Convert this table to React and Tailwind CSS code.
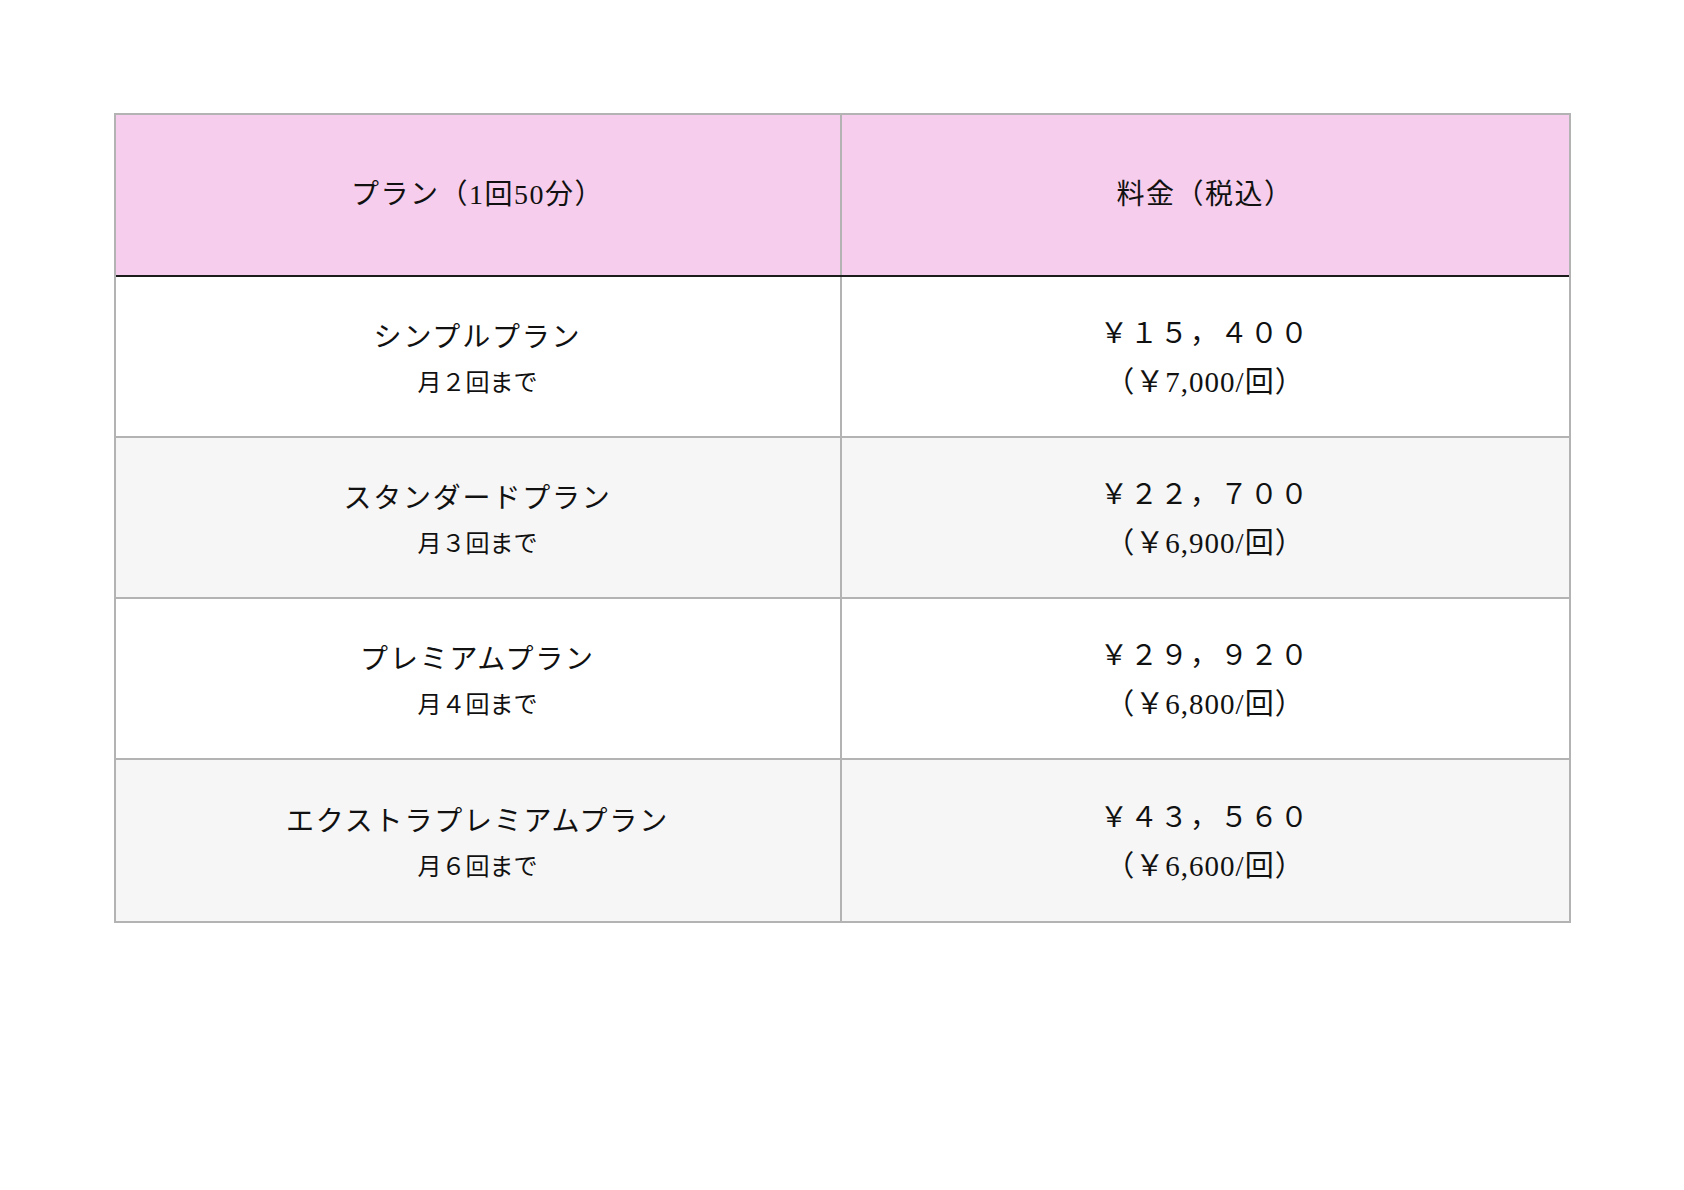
const plans = [
  { name: 'シンプルプラン', count: '月２回まで', price: '￥１５，４００', per: '（￥7,000/回）' },
  { name: 'スタンダードプラン', count: '月３回まで', price: '￥２２，７００', per: '（￥6,900/回）' },
  { name: 'プレミアムプラン', count: '月４回まで', price: '￥２９，９２０', per: '（￥6,800/回）' },
  { name: 'エクストラプレミアムプラン', count: '月６回まで', price: '￥４３，５６０', per: '（￥6,600/回）' },
];

export default function App() {
  return (
    <div className="min-h-[1190px] w-full bg-white pt-[113px] font-['Liberation_Serif','Noto_Sans_CJK_JP',serif] text-[#111]">
      <div className="mx-auto w-[1457px] border-2 border-[#b3b3b3]">
        {/* ヘッダー */}
        <div className="grid h-[162px] grid-cols-[726px_1fr] border-b-2 border-[#1c1c1c] bg-[#f6cdec] text-[28px] tracking-[1.5px]">
          <div className="flex items-center justify-center border-r-2 border-[#b3b3b3]">プラン（1回50分）</div>
          <div className="flex items-center justify-center">料金（税込）</div>
        </div>

        {/* プラン一覧 */}
        {plans.map((p, i) => (
          <div
            key={p.name}
            className={`grid h-[161px] grid-cols-[726px_1fr] ${i < plans.length - 1 ? 'border-b-2 border-[#b3b3b3]' : ''} ${i % 2 === 1 ? 'bg-[#f6f6f6]' : 'bg-white'}`}
          >
            <div className="flex flex-col items-center justify-center border-r-2 border-[#b3b3b3] pt-[4px]">
              <div className="text-[28px] leading-[48px] tracking-[1.8px]">{p.name}</div>
              <div className="text-[24px] leading-[42px]">{p.count}</div>
            </div>
            <div className="flex flex-col items-center justify-center pt-[3px]">
              <div className="text-[28px] leading-[48px] tracking-[2px]">{p.price}</div>
              <div className="text-[29px] leading-[48px] tracking-[1px]">{p.per}</div>
            </div>
          </div>
        ))}
      </div>
    </div>
  );
}
